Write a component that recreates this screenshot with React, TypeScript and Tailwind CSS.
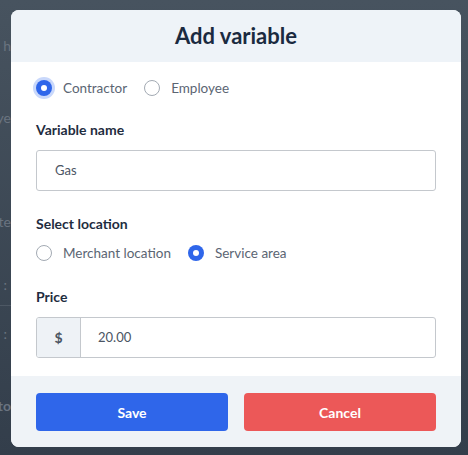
import React from "react";

function Radio({ checked, focus, label }: { checked?: boolean; focus?: boolean; label: string }) {
  return (
    <label className="flex items-center gap-[11px] h-6">
      {checked ? (
        <span
          className={
            "w-4 h-4 rounded-full bg-[#2f66ea] flex items-center justify-center " +
            (focus ? "ring-[3px] ring-[#c9d8fb]" : "")
          }
        >
          <span className="w-[6px] h-[6px] rounded-full bg-white" />
        </span>
      ) : (
        <span className="w-4 h-4 rounded-full border border-[#a3aab3] bg-white" />
      )}
      <span className="text-[13.5px] text-[#5b6573]">{label}</span>
    </label>
  );
}

export default function App() {
  return (
    <div
      className="relative w-[468px] h-[455px] overflow-hidden bg-gradient-to-b from-[#47535f] to-[#333e4b]"
      style={{ fontFamily: "Lato, 'Open Sans', sans-serif" }}
    >
      {/* faint page content behind overlay */}
      <div className="absolute left-0 top-0 w-[11px] h-full text-[#6a7480] text-[14px]">
        <div className="absolute right-0 top-[35px] whitespace-nowrap">you h</div>
        <div className="absolute right-0 top-[107px] whitespace-nowrap">Emplye</div>
        <div className="absolute right-0 top-[211px] whitespace-nowrap">Date</div>
        <div className="absolute right-[4px] top-[274px] whitespace-nowrap">:</div>
        <div className="absolute left-0 top-[305px] w-full h-px bg-[#4d5864]" />
        <div className="absolute right-[4px] top-[323px] whitespace-nowrap">:</div>
        <div className="absolute right-0 top-[395px] whitespace-nowrap font-bold">Toto</div>
      </div>

      <div className="absolute left-[11px] top-[10px] w-[450px] h-[437px] rounded-[8px] bg-white overflow-hidden flex flex-col">
        <div className="h-[52px] bg-[#eef3f8] flex items-center justify-center">
          <h2 className="text-[22px] font-bold text-[#1a2a40] leading-none">Add variable</h2>
        </div>

        <div className="flex-1 px-[25px] pt-[14px]">
          <div className="flex items-center gap-[17px]">
            <Radio checked focus label="Contractor" />
            <Radio label="Employee" />
          </div>

          <div className="mt-[20px] text-[14px] leading-5 font-bold text-[#1f2d3f]">Variable name</div>
          <div className="mt-[10px] h-[41px] border border-[#c4c8cd] rounded-[3px] flex items-center pl-[18px] text-[13px] text-[#4b5563]">
            Gas
          </div>

          <div className="mt-[23px] text-[14px] leading-5 font-bold text-[#1f2d3f]">Select location</div>
          <div className="mt-[7px] flex items-center gap-[17px]">
            <Radio label="Merchant location" />
            <Radio checked label="Service area" />
          </div>

          <div className="mt-[22px] text-[14px] leading-5 font-bold text-[#1f2d3f]">Price</div>
          <div className="mt-[10px] h-[41px] border border-[#c4c8cd] rounded-[3px] flex overflow-hidden">
            <div className="w-[44px] bg-[#eef2f6] border-r border-[#c4c8cd] flex items-center justify-center text-[14px] font-bold text-[#4b5563]">
              $
            </div>
            <div className="flex items-center pl-[17px] text-[13px] text-[#4b5563]">20.00</div>
          </div>
        </div>

        <div className="h-[71px] bg-[#eff3f7] px-[25px] pt-[17px] flex gap-[16px]">
          <button className="flex-1 h-[38px] rounded-[4px] bg-[#2f66ea] text-white text-[14px] font-bold">Save</button>
          <button className="flex-1 h-[38px] rounded-[4px] bg-[#ec5858] text-white text-[14px] font-bold">Cancel</button>
        </div>
      </div>
    </div>
  );
}
